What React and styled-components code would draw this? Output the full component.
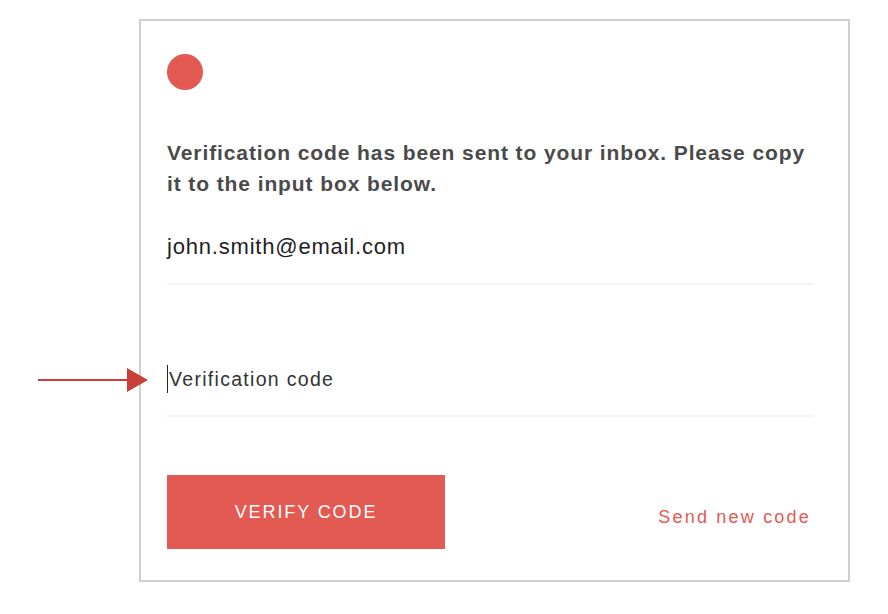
import React from 'react'
import styled, { createGlobalStyle } from 'styled-components'

const GlobalStyle = createGlobalStyle`
  html, body {
    margin: 0;
    padding: 0;
    background: #ffffff;
  }
  body {
    font-family: "Liberation Sans", Arial, sans-serif;
  }
`

const Page = styled.div`
  position: relative;
  width: 888px;
  height: 614px;
  padding: 19px 0 0 139px;
  box-sizing: border-box;
`

const Card = styled.div`
  width: 711px;
  height: 563px;
  box-sizing: border-box;
  border: 2px solid #cfcfcf;
  padding: 33px 35px 0 26px;
  display: flex;
  flex-direction: column;
`

const Dot = styled.div`
  width: 36px;
  height: 36px;
  border-radius: 50%;
  background: #e35a52;
`

const Heading = styled.h1`
  margin: 47px 0 0;
  font-family: "Liberation Sans", Arial, sans-serif;
  font-weight: 700;
  font-size: 21px;
  line-height: 31px;
  color: #4a4a4a;
  letter-spacing: 0.9px;
`

const Field = styled.div`
  display: flex;
  align-items: center;
  height: ${p => p.$height}px;
  margin-top: ${p => p.$top}px;
  border-bottom: 2px solid #f3f3f3;
  font-family: "Liberation Sans", Arial, sans-serif;
  font-size: ${p => p.$size}px;
  letter-spacing: ${p => p.$spacing}px;
  color: ${p => p.$color};
`

const Caret = styled.span`
  display: inline-block;
  width: 1px;
  height: 28px;
  margin-right: 1px;
  background: #222;
`

const Actions = styled.div`
  margin-top: 58px;
  display: flex;
  align-items: center;
  justify-content: space-between;
`

const Button = styled.button`
  width: 278px;
  height: 74px;
  border: none;
  background: #e35a52;
  color: #ffffff;
  font-family: "Liberation Sans", Arial, sans-serif;
  font-size: 18px;
  letter-spacing: 1.9px;
  cursor: pointer;
`

const LinkText = styled.a`
  margin-right: 2px;
  margin-top: 10px;
  color: #e35a52;
  font-family: "Liberation Sans", Arial, sans-serif;
  font-size: 18px;
  letter-spacing: 2.2px;
  text-decoration: none;
`

const Arrow = styled.svg`
  position: absolute;
  left: 38px;
  top: 367px;
`

export default function App() {
  return (
    <>
      <GlobalStyle />
      <Page>
        <Card>
          <Dot />
          <Heading>
            Verification code has been sent to your inbox. Please copy it to the input box below.
          </Heading>
          <Field $height={72} $top={12} $size={22} $spacing={0.8} $color="#1f1f1f">
            john.smith@email.com
          </Field>
          <Field $height={72} $top={58} $size={19.5} $spacing={1.3} $color="#333333">
            <Caret />Verification code
          </Field>
          <Actions>
            <Button>VERIFY CODE</Button>
            <LinkText href="#">Send new code</LinkText>
          </Actions>
        </Card>
        <Arrow width="112" height="26" viewBox="0 0 112 26">
          <line x1="0" y1="13" x2="92" y2="13" stroke="#c9403b" strokeWidth="2" />
          <polygon points="89,1 110,13 89,25" fill="#c9403b" />
        </Arrow>
      </Page>
    </>
  )
}
